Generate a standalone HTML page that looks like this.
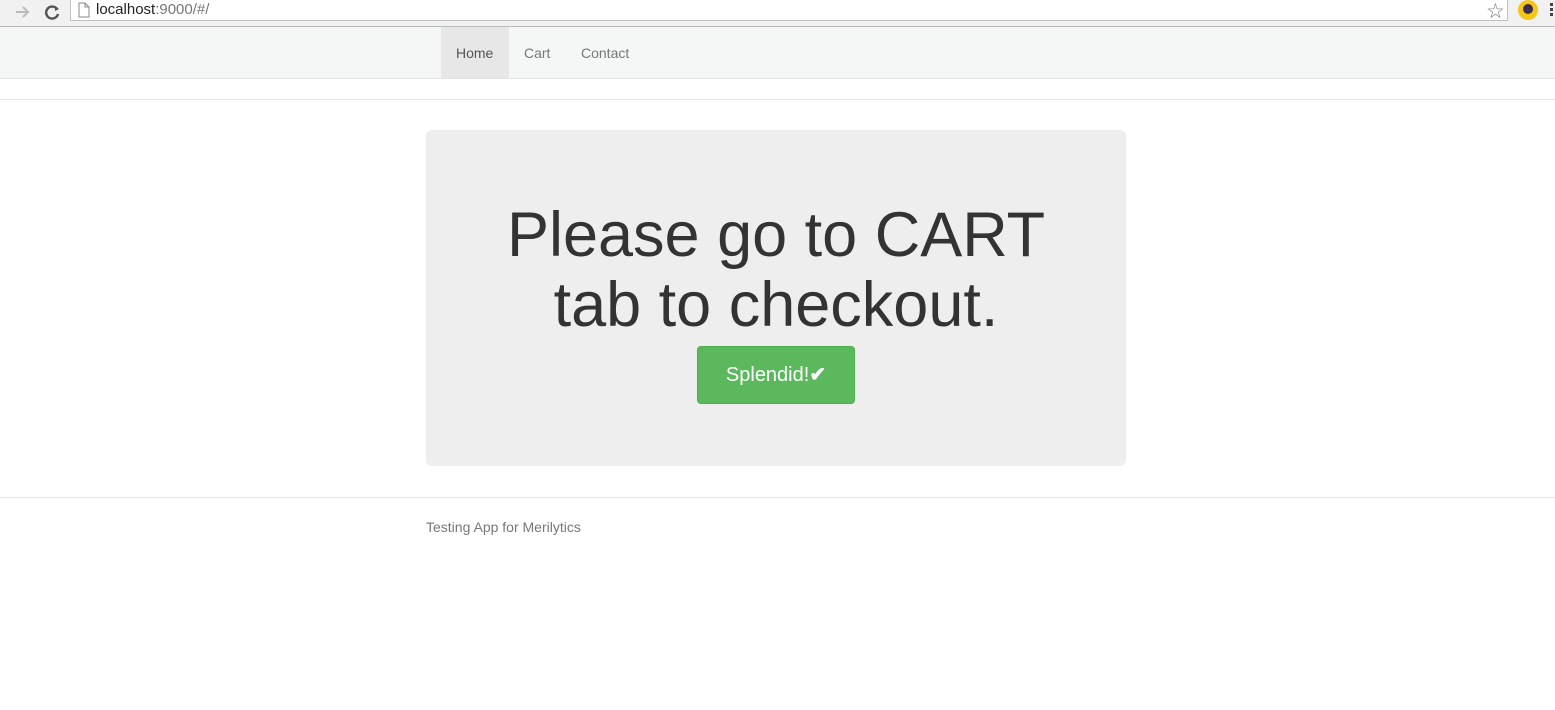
<!DOCTYPE html>
<html><head><style>
body{margin:0;width:1555px;height:710px;overflow:hidden;background:#fff;font-family:"Liberation Sans",sans-serif;position:relative}
.chrome{position:absolute;left:0;top:0;width:1555px;height:27px;background:#f1f1f1;border-bottom:1px solid #b8b8b8;box-sizing:border-box}
.addr{position:absolute;left:70px;top:-1px;width:1438px;height:22px;background:#fff;border:1px solid #c0c0c0;border-top:none;box-sizing:border-box}
.url{position:absolute;left:96px;top:1px;font-size:15px;color:#222}
.url span{color:#777}
.nav{position:absolute;left:0;top:27px;width:1555px;height:52px;background:#f5f7f6;border-bottom:1px solid #e3e3e3;box-sizing:border-box}
.nav a{position:absolute;top:1px;height:51px;line-height:51px;font-size:14px;color:#777;text-decoration:none}
.hr{position:absolute;left:0;width:1555px;height:1px;background:#e5e5e5}
.jumbo{position:absolute;left:426px;top:130px;width:700px;height:336px;background:#eee;border-radius:6px;text-align:center}
h1{margin:0;position:absolute;top:70px;left:0;width:700px;font-weight:normal;font-size:63px;line-height:70px;color:#333}
.btn{position:absolute;left:271px;top:216px;width:158px;height:58px;background:#5cb85c;border:1px solid #4cae4c;box-sizing:border-box;border-radius:4px;color:#fff;font-size:20px;line-height:56px}
.foot{position:absolute;left:426px;top:519px;font-size:14px;color:#777}
</style></head><body>
<div class="chrome">
<svg style="position:absolute;left:0;top:3px" width="70" height="18"><path d="M16 9h12M23 4l5 5-5 5" stroke="#bbb" stroke-width="2" fill="none"/><path d="M57 6a6 6 0 1 0 1 5" stroke="#555" stroke-width="2.4" fill="none"/><path d="M55 3l4 3-4 2z" fill="#555"/></svg>
<div class="addr"></div>
<svg style="position:absolute;left:78px;top:2px" width="12" height="16"><path d="M1 1h6l4 4v10H1z M7 1v4h4" stroke="#888" fill="#fff"/></svg>
<div class="url">localhost<span>:9000/#/</span></div>
<div style="position:absolute;left:1486px;top:-1px;font-size:21px;color:#777">☆</div>
<div style="position:absolute;left:1518px;top:0;width:20px;height:20px;border-radius:50%;background:#f5c518"></div>
<div style="position:absolute;left:1523px;top:4px;width:10px;height:10px;border-radius:50%;background:#3a2d4f"></div>
<div style="position:absolute;left:1550px;top:3px;width:3px;height:14px;background:repeating-linear-gradient(#444 0 3px,transparent 3px 5px)"></div>
</div>
<div class="nav">
<div style="position:absolute;left:441px;top:0;width:68px;height:51px;background:#e7e7e7"></div>
<a style="left:456px;color:#555">Home</a>
<a style="left:524px">Cart</a>
<a style="left:581px">Contact</a>
</div>
<div class="hr" style="top:99px"></div>
<div class="jumbo">
<h1>Please go to CART<br>tab to checkout.</h1>
<div class="btn">Splendid!<b>✔</b></div>
</div>
<div class="hr" style="top:497px"></div>
<div class="foot">Testing App for Merilytics</div>
</body></html>
